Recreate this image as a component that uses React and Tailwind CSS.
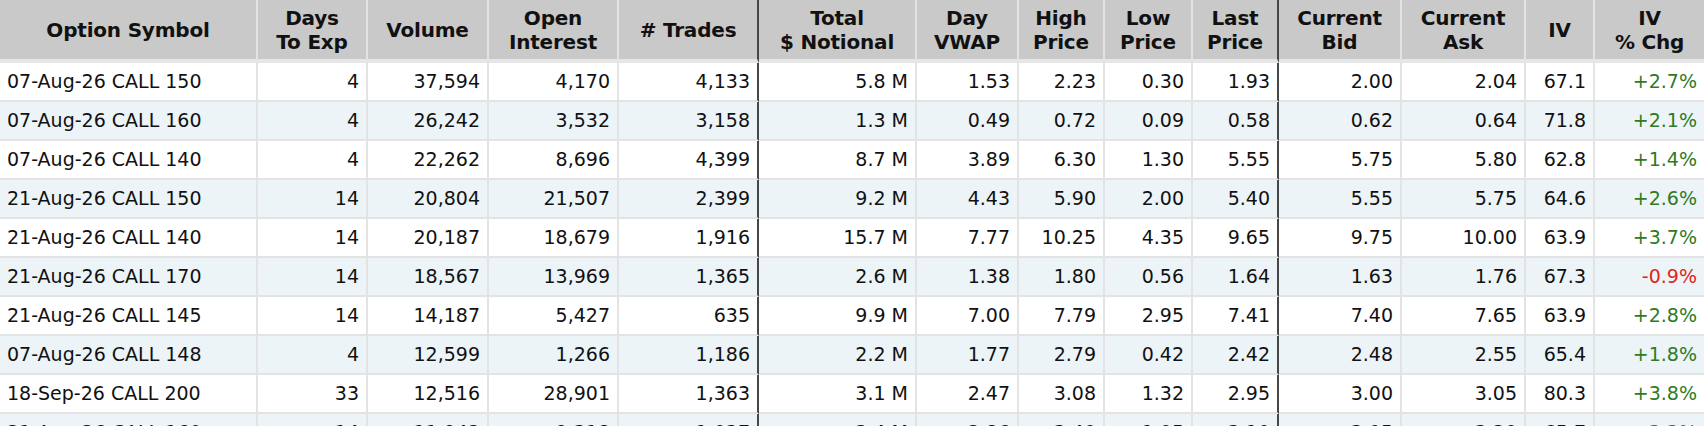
const columns = [
    { label: ["Option Symbol"], width: "w-[258px]", align: "justify-start" },
    { label: ["Days", "To Exp"], width: "w-[110px]" },
    { label: ["Volume"], width: "w-[121px]" },
    { label: ["Open", "Interest"], width: "w-[130px]" },
    { label: ["# Trades"], width: "w-[140px]", dark: true },
    { label: ["Total", "$ Notional"], width: "w-[158px]" },
    { label: ["Day", "VWAP"], width: "w-[102px]" },
    { label: ["High", "Price"], width: "w-[86px]" },
    { label: ["Low", "Price"], width: "w-[88px]" },
    { label: ["Last", "Price"], width: "w-[86px]", dark: true },
    { label: ["Current", "Bid"], width: "w-[123px]" },
    { label: ["Current", "Ask"], width: "w-[124px]" },
    { label: ["IV"], width: "w-[69px]" },
    { label: ["IV", "% Chg"], width: "w-[109px]", last: true },
]

const rows = [
    ["07-Aug-26 CALL 150", "4", "37,594", "4,170", "4,133", "5.8 M", "1.53", "2.23", "0.30", "1.93", "2.00", "2.04", "67.1", "+2.7%"],
    ["07-Aug-26 CALL 160", "4", "26,242", "3,532", "3,158", "1.3 M", "0.49", "0.72", "0.09", "0.58", "0.62", "0.64", "71.8", "+2.1%"],
    ["07-Aug-26 CALL 140", "4", "22,262", "8,696", "4,399", "8.7 M", "3.89", "6.30", "1.30", "5.55", "5.75", "5.80", "62.8", "+1.4%"],
    ["21-Aug-26 CALL 150", "14", "20,804", "21,507", "2,399", "9.2 M", "4.43", "5.90", "2.00", "5.40", "5.55", "5.75", "64.6", "+2.6%"],
    ["21-Aug-26 CALL 140", "14", "20,187", "18,679", "1,916", "15.7 M", "7.77", "10.25", "4.35", "9.65", "9.75", "10.00", "63.9", "+3.7%"],
    ["21-Aug-26 CALL 170", "14", "18,567", "13,969", "1,365", "2.6 M", "1.38", "1.80", "0.56", "1.64", "1.63", "1.76", "67.3", "-0.9%"],
    ["21-Aug-26 CALL 145", "14", "14,187", "5,427", "635", "9.9 M", "7.00", "7.79", "2.95", "7.41", "7.40", "7.65", "63.9", "+2.8%"],
    ["07-Aug-26 CALL 148", "4", "12,599", "1,266", "1,186", "2.2 M", "1.77", "2.79", "0.42", "2.42", "2.48", "2.55", "65.4", "+1.8%"],
    ["18-Sep-26 CALL 200", "33", "12,516", "28,901", "1,363", "3.1 M", "2.47", "3.08", "1.32", "2.95", "3.00", "3.05", "80.3", "+3.8%"],
    ["21-Aug-26 CALL 160", "14", "11,942", "9,318", "1,027", "3.4 M", "2.86", "3.40", "1.05", "3.10", "3.05", "3.20", "65.7", "+2.2%"],
]

const borderFor = (col) =>
    col.last ? "" : col.dark ? "border-r-2 border-r-[#474747]" : "border-r-2 border-r-[#e3e3e3]"

const App = () => {
    return (
        <div className="w-[1704px] h-[426px] overflow-hidden bg-white text-[#111] font-['DejaVu_Sans',sans-serif]">
            <div className="flex">
                {columns.map((col, i) => (
                    <div
                        key={i}
                        className={`${col.width} ${borderFor(col)} shrink-0 h-[63px] border-b-4 border-b-[#e6e6e6] bg-[#c9c9c9] flex flex-col items-center justify-center text-center font-bold text-[20px] leading-[24px] tracking-[-0.2px]`}
                    >
                        {col.label.map((line) => (
                            <span key={line} className="whitespace-nowrap">{line}</span>
                        ))}
                    </div>
                ))}
            </div>

            {rows.map((row, r) => (
                <div key={r} className={`flex ${r % 2 === 1 ? "bg-[#ecf4f7]" : "bg-white"}`}>
                    {row.map((cell, c) => {
                        const col = columns[c]
                        let color = ""
                        if (c === 13) color = cell.startsWith("-") ? "text-[#e0261c]" : "text-[#2f7a25]"
                        return (
                            <div
                                key={c}
                                className={`${col.width} ${borderFor(col)} ${color} shrink-0 h-[39px] border-b-2 border-b-[#e3e3e3] flex items-center whitespace-nowrap text-[19px] ${c === 0 ? "justify-start pl-[7px]" : "justify-end pr-[7px]"}`}
                            >
                                {cell}
                            </div>
                        )
                    })}
                </div>
            ))}
        </div>
    )
}

export default App
